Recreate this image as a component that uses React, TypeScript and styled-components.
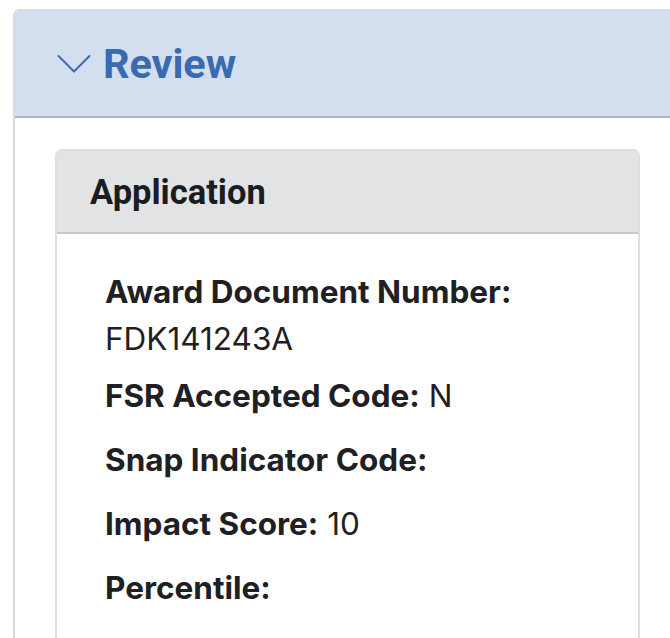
import React from "react";
import styled, { createGlobalStyle } from "styled-components";

const Global = createGlobalStyle`
  html, body { margin: 0; padding: 0; background: #ffffff; overflow: hidden; }
  body { font-family: Inter, "Noto Sans", sans-serif; color: #1f2023; }
`;

const Page = styled.div`
  padding: 9px 0 0 13px;
  width: 700px;
`;

const Section = styled.section`
  width: 665px;
  border: 2px solid #d5dce5;
  border-radius: 7px 7px 0 0;
  background: #fff;
`;

const SectionHeader = styled.header`
  display: flex;
  align-items: center;
  gap: 12px;
  height: 105px;
  padding-left: 42px;
  background: #d3dfee;
  border-bottom: 2px solid #a9b5c4;
  border-radius: 5px 5px 0 0;
`;

const SectionTitle = styled.h2`
  margin: 0;
  font-family: Roboto, "Liberation Sans", sans-serif;
  font-weight: 700;
  font-size: 41.5px;
  color: #3a6bb1;
  letter-spacing: -0.1px;
`;

const SectionBody = styled.div`
  padding: 31px 40px 0 40px;
`;

const Card = styled.div`
  border: 2px solid #dedfe1;
  border-radius: 7px 7px 0 0;
`;

const CardHeader = styled.div`
  height: 81px;
  display: flex;
  align-items: center;
  padding-left: 33px;
  background: #e2e3e5;
  border-bottom: 2px solid #c8c9cb;
  border-radius: 5px 5px 0 0;
`;

const CardTitle = styled.h3`
  margin: 0;
  font-family: Roboto, "Liberation Sans", sans-serif;
  font-weight: 700;
  font-size: 34.5px;
  color: #1b1c1f;
`;

const CardBody = styled.div`
  padding: 34px 48px 0 48px;
`;

const Field = styled.p<{ $gap?: number }>`
  margin: 0 0 ${(p) => p.$gap ?? 17}px 0;
  font-size: 31.5px;
  line-height: 47px;
  color: #1f2023;
`;

const Label = styled.strong`
  font-weight: 700;
`;

const Chevron = () => (
  <svg width="34" height="20" viewBox="0 0 34 20" fill="none">
    <path d="M1.5 2 L17 17.5 L32.5 2" stroke="#3a6bb1" strokeWidth="2" strokeLinecap="round" strokeLinejoin="round" />
  </svg>
);

const fields: { label: string; value?: string }[] = [
  { label: "Award Document Number:", value: "FDK141243A" },
  { label: "FSR Accepted Code:", value: "N" },
  { label: "Snap Indicator Code:" },
  { label: "Impact Score:", value: "10" },
  { label: "Percentile:" },
  { label: "Total Weighted Score:" },
];

export default function App() {
  return (
    <>
      <Global />
      <Page>
        <Section>
          <SectionHeader>
            <Chevron />
            <SectionTitle>Review</SectionTitle>
          </SectionHeader>
          <SectionBody>
            <Card>
              <CardHeader>
                <CardTitle>Application</CardTitle>
              </CardHeader>
              <CardBody>
                {fields.map((f, i) => (
                  <Field key={f.label} $gap={i === 0 ? 10 : 17}>
                    <Label>{f.label}</Label>
                    {f.value ? " " + f.value : ""}
                  </Field>
                ))}
              </CardBody>
            </Card>
          </SectionBody>
        </Section>
      </Page>
    </>
  );
}
